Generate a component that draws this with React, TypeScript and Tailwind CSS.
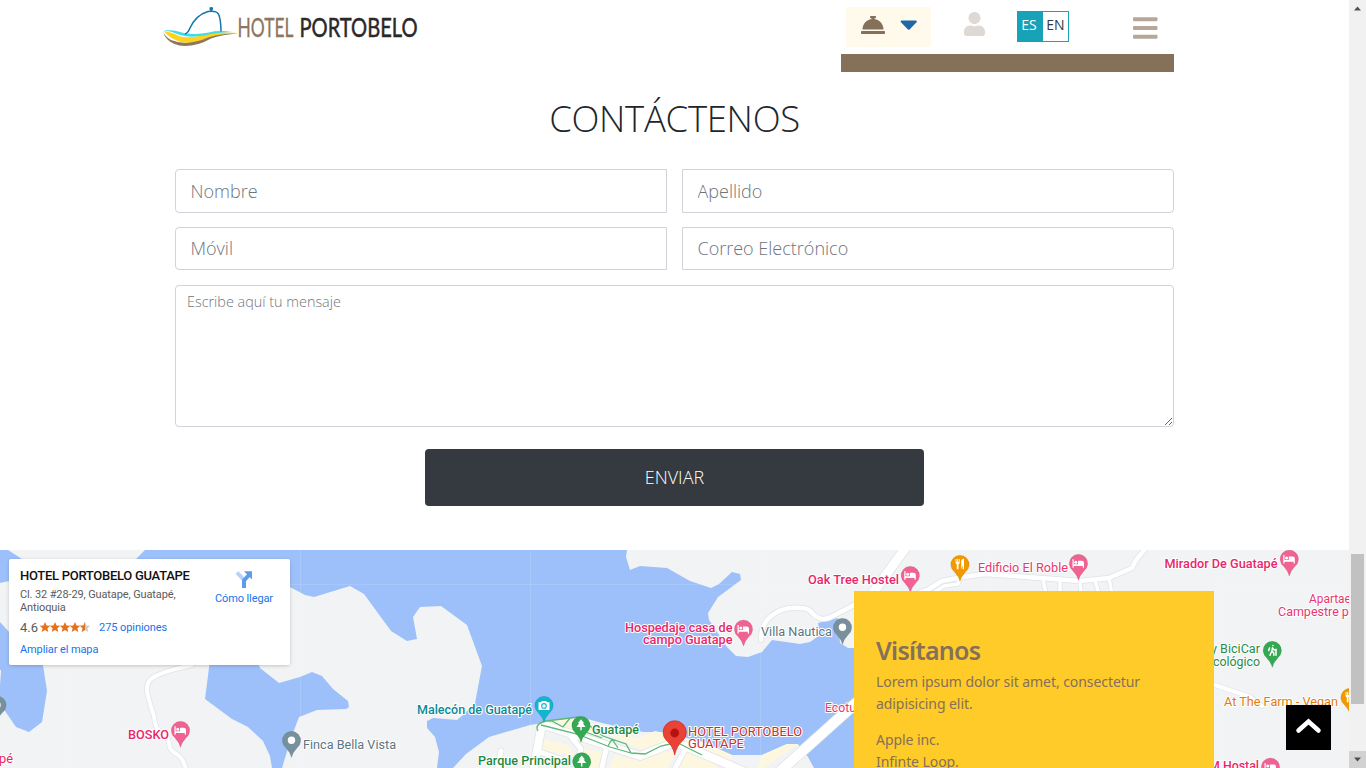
import React from "react";
import { FaConciergeBell, FaUser, FaBars, FaCaretDown } from "react-icons/fa";

const LAND = "#f1f3f4";
const WATER = "#9dc0fa";
const BLOCK = "#fef7e0";
const PINK = "#f06292";
const GREEN = "#34a853";
const SLATE = "#78909c";

type Glyph = "bed" | "dot" | "tree" | "camera" | "fork" | "hiker";

function PinGlyph({ kind }: { kind: Glyph }) {
  switch (kind) {
    case "bed":
      return (
        <g fill="#fff">
          <path d="M-6 -4h1.2v5h4.3v-3.6h3.8q2.2 0 2.2 2.2v4.9h-1.2v-1.8h-9.1v1.8h-1.2z" />
          <circle cx="-2.7" cy="-1.1" r="1.5" />
        </g>
      );
    case "dot":
      return <circle r="3.7" fill="#fff" />;
    case "tree":
      return <path d="M0 -6l3.2 4h-1.4l2.8 3.6h-3.9v3.4h-1.4v-3.4h-3.9l2.8-3.6h-1.4z" fill="#fff" />;
    case "camera":
      return (
        <g>
          <path d="M-5.5 -3h2.5l1-1.4h4l1 1.4h2.5v7.6h-11z" fill="#fff" />
          <circle cy=".6" r="2.3" fill="none" stroke="#12b5cb" strokeWidth="1.1" />
        </g>
      );
    case "fork":
      return (
        <g fill="#fff">
          <path d="M-4.4 -5.3h.9v3h.7v-3h.9v3h.7v-3h.9v3.7q0 1.3-1.2 1.6v5h-1.7v-5q-1.2-.3-1.2-1.6z" />
          <path d="M1.2 5v-8q0-2.2 2.8-2.5v10.500h-1.300v-3.900z" />
        </g>
      );
    case "hiker":
      return (
        <g fill="none" stroke="#fff" strokeWidth="1.5" strokeLinecap="round">
          <circle cx=".6" cy="-4.700" r=".8" fill="#fff" stroke="none" />
          <path d="M.2 -2.600l-.6 3.500 1.700 1.500.3 2.500M-.6 1l-1.700 4M.7 -1.700l1.200 1.300h1.300M3.700 -1v6M-2.800 -2.300l-.8 2.500" />
        </g>
      );
  }
}

function Pin({ x, y, color, kind }: { x: number; y: number; color: string; kind: Glyph }) {
  return (
    <g transform={`translate(${x} ${y})`}>
      <path d="M0 17.300Q-1.200 12-5.500 7.600A9.200 9.200 0 1 1 5.500 7.600Q1.200 12 0 17.300z" fill={color} stroke="#000" strokeOpacity=".13" strokeWidth=".6" />
      <PinGlyph kind={kind} />
    </g>
  );
}

const pins: { x: number; y: number; color: string; kind: Glyph }[] = [
  { x: -3, y: 705, color: SLATE, kind: "dot" },
  { x: 180.5, y: 730.3, color: PINK, kind: "bed" },
  { x: 291.500, y: 740.3, color: SLATE, kind: "dot" },
  { x: 544, y: 705.3, color: "#12b5cb", kind: "camera" },
  { x: 581, y: 725.3, color: GREEN, kind: "tree" },
  { x: 581.700, y: 761.500, color: GREEN, kind: "tree" },
  { x: 743.500, y: 629, color: PINK, kind: "bed" },
  { x: 842.500, y: 627.3, color: SLATE, kind: "dot" },
  { x: 910.3, y: 575.3, color: PINK, kind: "bed" },
  { x: 960, y: 564.3, color: "#f29900", kind: "fork" },
  { x: 1078.500, y: 563.3, color: PINK, kind: "bed" },
  { x: 1289.3, y: 559, color: PINK, kind: "bed" },
  { x: 1272.3, y: 650.3, color: GREEN, kind: "hiker" },
  { x: 1350, y: 697.3, color: "#f29900", kind: "fork" },
  { x: 1270.500, y: 767, color: PINK, kind: "bed" },
];

interface MapLabel { t: string; x: number; y: number; w: number; c: string; bold?: boolean }

const labels: MapLabel[] = [
  { t: "pé", x: -1, y: 763, w: 14, c: "#e8276b" },
  { t: "BOSKO", x: 128, y: 739, w: 41, c: "#e8276b", bold: true },
  { t: "Finca Bella Vista", x: 303, y: 749, w: 93, c: "#5c7480" },
  { t: "Malecón de Guatapé", x: 417, y: 714, w: 115, c: "#0a8a96", bold: true },
  { t: "Guatapé", x: 592, y: 734, w: 47, c: "#1e8a40", bold: true },
  { t: "Parque Principal", x: 478, y: 764.500, w: 93, c: "#1e8a40", bold: true },
  { t: "Hospedaje casa de", x: 625, y: 631.500, w: 107.500, c: "#e8276b", bold: true },
  { t: "campo Guatape", x: 643, y: 644, w: 89.500, c: "#e8276b", bold: true },
  { t: "Villa Nautica", x: 761, y: 636, w: 71, c: "#5c7480" },
  { t: "Ecotu", x: 825, y: 711.500, w: 31, c: "#e8376f" },
  { t: "Oak Tree Hostel", x: 808, y: 584, w: 91, c: "#e8276b", bold: true },
  { t: "Edificio El Roble", x: 978, y: 572, w: 90, c: "#e8376f" },
  { t: "Mirador De Guatapé", x: 1164.500, y: 568, w: 113, c: "#e8276b", bold: true },
  { t: "Apartaes", x: 1309, y: 603, w: 48, c: "#e8376f" },
  { t: "Campestre po", x: 1278, y: 615.500, w: 78, c: "#e8376f" },
  { t: "y BiciCar", x: 1211, y: 653, w: 49, c: "#2a8a47" },
  { t: "Ecológico", x: 1206, y: 666, w: 54, c: "#2a8a47" },
  { t: "At The Farm - Vegan", x: 1224, y: 706, w: 114, c: "#e37a10" },
  { t: "M Hostal", x: 1209, y: 770, w: 50, c: "#e8276b", bold: true },
  { t: "HOTEL PORTOBELO", x: 688, y: 735.500, w: 114, c: "#c72f2c" },
  { t: "GUATAPE", x: 688, y: 748, w: 56, c: "#c72f2c" },
];

const roads: { d: string; w: number }[] = [
  { d: "M192 665Q156 673 150 680Q145 686 148 696Q151 708 154 716Q155 725 157 728L168 739L170 748Q172 752 178 755Q184 760 186 770", w: 4 },
  { d: "M761 640Q761 624 771 616Q783 606 801 608Q809 608 813 614Q820 621 829 618L854 605L870 594", w: 4.500 },
  { d: "M907 546L872 594", w: 9 },
  { d: "M915 594L929 589L942 581L963 577L985 574L1027 577L1080 581L1109 578L1132 568L1136 560L1146 548", w: 4.500 },
  { d: "M933 593L944 586L958 584L961 577", w: 3.500 },
  { d: "M1043 579L1046 594M1060 581L1060 594M1080 581L1081 594M1095 580L1099 594M1109 578L1112 594", w: 3.500 },
  { d: "M1212 684L1250 697L1262 706", w: 4 },
  { d: "M856 703L778 773", w: 10 },
  { d: "M533 773L541 729Q544 724 550 727L640 756L668 745Q674 742 682 745L720 761L745 772", w: 8 },
  { d: "M498 768L501 751", w: 5 },
  { d: "M571 737L581 749L575 768M607 745L601 772M686 748L673 772M540 752L575 764", w: 5 },
];

function Star({ x, clip }: { x: number; clip?: boolean }) {
  const d = "M5 0l1.500 3.500 3.700.3-2.800 2.500.9 3.700-3.300-2-3.300 2 .9-3.700-2.800-2.500 3.700-.3z";
  return (
    <g transform={`translate(${x} 0)`}>
      <path d={d} fill={clip ? "#ccc" : "#e7711b"} />
      {clip && <path d="M5 0v8l-3.300 2 .9-3.700-2.800-2.500 3.700-.3z" fill="#e7711b" />}
    </g>
  );
}

function AreaMap() {
  return (
    <svg className="block h-[218px] w-[1349px]" viewBox="0 550 1349 218">
      <rect y="550" width="1349" height="218" fill={LAND} />
      <g fill={WATER}>
        <path d="M0 550H8L22 559L40 580L9 581L0 583z" />
        <path d="M0 622L9 632L35 650L43 665L47 691L42 722L29 732L16 727L5 711L0 702V685L1 672V670H0z" />
        <path d="M210 660H257L260 668L279 683L300 677L312 672L322 676L333 689L348 701L349 707L346 709L317 710L299 717L291 738L282 768H272L270 756L263 741L248 727L232 719L205 699z" />
        <path d="M145 550H627L626 557L630 570L640 566L667 568L690 581L711 588L719 584L732 572L740 574L741 580L718 597L708 613L709 620L727 647L736 656L748 657L762 652L772 640L800 644L810 642L820 635L818 623L830 620L838 618L840 643L848 648H870V768H814L808 757L798 744H787L762 755H732L703 742L663 732L643 732L602 723L580 717L530 725L489 737L466 754L453 768H437L439 752L435 737L427 728V721L433 718L457 720L463 715L475 703L482 666L467 625L441 606L420 607L413 617L417 639L407 641L391 631L364 594L350 586L314 597L305 595L290 587L260 559H136z" />
      </g>
      <g stroke="#fff" strokeOpacity=".12">
        <path d="M0 584.500H1349M69.500 550V768M300.500 550V768M530.500 550V768M760.500 550V768M991.500 550V768M1221.500 550V768" />
      </g>
      <g fill={BLOCK}>
        <path d="M545 739L568 745L576 757L541 749z" />
        <path d="M548 720L575 719L603 735L567 730z" />
        <path d="M582 749L604 752L599 768H580z" />
        <path d="M615 755L632 759L668 750L676 753L668 768H609z" />
        <path d="M606 733L640 738L655 731L705 743L732 755L728 763L682 742L665 743L646 752L625 742z" />
        <path d="M560 736L588 737L634 748L609 752z" />
        <path d="M762 755L787 744H798L764 768H758z" />
        <path d="M687 752L718 764L717 768H678z" />
      </g>
      <g fill="none" stroke="#e0e3e6" strokeLinejoin="round" strokeLinecap="round">
        {roads.map((r) => <path key={r.d} d={r.d} strokeWidth={r.w + 1.500} />)}
      </g>
      <g fill="none" stroke="#fff" strokeLinejoin="round" strokeLinecap="round">
        {roads.map((r) => <path key={r.d} d={r.d} strokeWidth={r.w} />)}
      </g>
      <path
        d="M538 731Q534 724 546 721L578 717L603 736L626 744L631 753L610 747L577 734L541 725M552 721L563 727L570 718M580 730L602 738M608 746L612 739M618 748L612 739M631 753L645 754L661 746L674 743M680 744L702 755"
        fill="none" stroke="#5bb974" strokeWidth="1.300"
      />
      {pins.map((p) => <Pin key={`${p.x}-${p.y}`} {...p} />)}
      <path d="M674.700 755Q673 746 666.500 740.500A11.600 11.600 0 1 1 682.900 740.500Q676.400 746 674.700 755z" fill="#ea4335" stroke="#c5221f" strokeWidth=".6" />
      <circle cx="674.700" cy="733" r="4.400" fill="#b31412" />
      <g fontFamily="Roboto, 'Liberation Sans', sans-serif" fontSize="12.500" stroke="#fff" strokeWidth="2" strokeLinejoin="round">
        {labels.map((l) => (
          <text key={l.t} x={l.x} y={l.y} textLength={l.w} lengthAdjust="spacingAndGlyphs" fill={l.c} fontWeight={l.bold ? 500 : 400} style={{ paintOrder: "stroke" }}>
            {l.t}
          </text>
        ))}
      </g>
    </svg>
  );
}

function PlaceCard() {
  return (
    <div className="absolute left-[9px] top-[9px] flex h-[106px] w-[281px] justify-between rounded-[2px] bg-white pl-[11px] pr-[17px] font-[Roboto,sans-serif] text-[11px] leading-[13px] shadow-[0_1px_4px_-1px_rgba(0,0,0,0.3)]">
      <div className="w-[180px] pt-[9px]">
        <div className="whitespace-nowrap text-[13px] font-medium leading-[16px] tracking-[-0.28px] text-[#111]">HOTEL PORTOBELO GUATAPE</div>
        <div className="mt-[4px] tracking-[-0.12px] text-[#5b5b5b]">Cl. 32 #28-29, Guatape, Guatapé,<br />Antioquia</div>
        <div className="mt-[5px] flex h-[16px] items-center">
          <span className="text-[13px] text-[#5b5b5b]">4.6</span>
          <svg className="-mt-px ml-[2px] h-[10px] w-[51px]" viewBox="0 0 51 10">
            <Star x={0} /><Star x={10} /><Star x={20} /><Star x={30} /><Star x={40} clip />
          </svg>
          <a className="ml-[8px] tracking-[-0.08px] text-[#1a73e8]">275 opiniones</a>
        </div>
        <a className="mt-[8px] block tracking-[-0.1px] text-[#1a73e8]">Ampliar el mapa</a>
      </div>
      <div className="flex flex-col items-center pt-[12px] text-[#1a73e8]">
        <svg className="h-[17px] w-[18px]" viewBox="0 0 18 17">
          <path d="M2 1.500L9 9" stroke="#b5d2fb" strokeWidth="4" />
          <path d="M9 17V9.500L14 4" fill="none" stroke="#5b9cee" strokeWidth="4" />
          <path d="M9 .3H17V8.600z" fill="#5b9cee" />
        </svg>
        <a className="mt-[4px] tracking-[-0.1px]">Cómo llegar</a>
      </div>
    </div>
  );
}

function Logo() {
  return (
    <svg className="h-[50px] w-[270px] overflow-visible" viewBox="160 0 270 50">
      <path d="M163 31Q165 37 171 40Q180 43.500 188 42.500Q198 41 208 36Q220 32.500 238 33.500Q222 34.500 211 38.500Q198 46 185 46Q173 45.500 167 39Q164 36 163 31z" fill="#8f755c" />
      <path d="M163.500 31Q172 32 180 36.500Q190 38.500 203 35Q217 31.500 238 33Q220 33.500 208 37.500Q195 43.500 183 42.500Q171 40 163.500 31z" fill="#ffd21f" />
      <path d="M163.500 30Q174 29.500 184 33Q196 35 209 32.500Q218 30 232 32Q214 32.500 204 35.500Q190 38 180 35Q172 31.500 163.500 30z" fill="#3fdce2" />
      <path d="M185 34Q188 33 190 28Q196 15 208 11.500Q216 10.500 218.500 14Q221 20 221 31.500" fill="none" stroke="#1175ae" strokeWidth="1.500" />
      <path d="M209.500 7.500Q211 6.500 213 7.500Q213.500 9 212 11H210.500Q209 9 209.500 7.500z" fill="#1175ae" />
      <g fontFamily="Lato, sans-serif" fontSize="27.500">
        <text x="237.500" y="36.500" textLength="56" lengthAdjust="spacingAndGlyphs" fill="#8f755c" stroke="#8f755c" strokeWidth=".3">HOTEL</text>
        <text x="299.500" y="36.500" textLength="118" lengthAdjust="spacingAndGlyphs" fill="#2b2829" stroke="#2b2829" strokeWidth=".5">PORTOBELO</text>
      </g>
    </svg>
  );
}

function Header() {
  return (
    <header className="flex h-[72px] justify-between pl-[160px] pr-[175px]">
      <Logo />
      <div className="flex w-[333px] flex-col justify-between">
        <div className="flex pl-[5px]">
          <div className="mt-[7px] flex h-[40px] w-[85px] items-center bg-[#fffaec] pl-[15px]">
            <FaConciergeBell className="-mt-[5px] h-[24px] w-[24px] text-[#857059]" />
            <FaCaretDown className="-mt-[7px] ml-[15px] h-[28px] w-[17.500px] text-[#1f67a8]" />
          </div>
          <FaUser className="ml-[33px] mt-[12px] h-[24px] w-[21px] text-[#dfd9d3]" />
          <div className="ml-[32px] mt-[11px] flex h-[31px] w-[52px] border border-[#17a2b8] text-[14px] leading-[26px]">
            <span className="w-[25px] bg-[#17a2b8] pr-[3px] text-center text-white">ES</span>
            <span className="flex-1 text-center text-[#343a40]">EN</span>
          </div>
          <FaBars className="ml-[64px] mt-[14px] h-[28px] w-[24.500px] text-[#b5a899]" />
        </div>
        <div className="h-[18px] bg-[#857059]" />
      </div>
    </header>
  );
}

const field = "border border-[#ced4da] bg-white pl-[14.500px] text-[18px] font-light outline-none placeholder:text-[#6c757d]";

function ContactForm() {
  return (
    <form className="flex h-[478px] flex-col px-[175px]">
      <h1 className="mt-[21px] text-center text-[36.500px] font-light leading-[50px] tracking-[-0.3px] text-[#212529]">CONTÁCTENOS</h1>
      <div className="mt-[26px] grid grid-cols-2 gap-x-[15px] gap-y-[14px]">
        <input className={`${field} h-[44px] rounded-l-[4px]`} placeholder="Nombre" />
        <input className={`${field} h-[44px] rounded-r-[4px]`} placeholder="Apellido" />
        <input className={`${field} h-[43px] rounded-l-[4px] pb-[2px]`} placeholder="Móvil" />
        <input className={`${field} h-[43px] rounded-r-[4px] pb-[2px]`} placeholder="Correo Electrónico" />
      </div>
      <textarea
        className="mt-[15px] block h-[142px] w-full shrink-0 resize rounded-[4px] border border-[#ced4da] px-[11px] py-[5px] text-[14.400px] font-light leading-[21px] outline-none placeholder:text-[#6c757d]"
        placeholder="Escribe aquí tu mensaje"
      />
      <button type="button" className="mx-auto mt-[22px] h-[57px] w-[499px] rounded-[4px] bg-[#343a40] text-[18px] font-light text-white">ENVIAR</button>
    </form>
  );
}

function VisitCard() {
  return (
    <div className="absolute left-[854px] top-[41px] h-[177px] w-[360px] overflow-hidden bg-[#ffcb29] px-[22px] pt-[44px] font-['Noto_Sans',sans-serif] text-[14px] leading-[22px] text-[#857059]">
      <h2 className="text-[25px] font-semibold leading-[30px] tracking-[-0.7px]">Visítanos</h2>
      <p className="mt-[6px] whitespace-nowrap tracking-[-0.07px]">Lorem ipsum dolor sit amet, consectetur<br />adipisicing elit.</p>
      <p className="mt-[14px] tracking-[-0.07px]">Apple inc.<br />Infinte Loop.</p>
    </div>
  );
}

function Scrollbar() {
  return (
    <div className="flex w-[17px] flex-col items-center bg-[#f1f1f1]">
      <svg className="h-[17px] w-[17px]" viewBox="0 0 17 17"><path d="M5 10.500L8.500 6.500L12 10.500z" fill="#505050" /></svg>
      <div className="mt-[537px] h-[150px] w-[13px] bg-[#c1c1c1]" />
      <svg className="mt-auto h-[17px] w-[17px] bg-[#d2d2d2]" viewBox="0 0 17 17"><path d="M5 6.500L8.500 10.500L12 6.500z" fill="#505050" /></svg>
    </div>
  );
}

export default function App() {
  return (
    <div className="flex h-[768px] w-[1366px] overflow-hidden bg-white font-['Open_Sans',sans-serif]">
      <main className="w-[1349px]">
        <Header />
        <ContactForm />
        <section className="relative h-[218px] overflow-hidden">
          <AreaMap />
          <PlaceCard />
          <VisitCard />
          <button type="button" aria-label="Subir" className="absolute left-[1286px] top-[155px] flex h-[45px] w-[45px] items-center justify-center bg-black">
            <svg className="-mt-[3px] h-[20px] w-[28px]" viewBox="0 0 28 20"><path d="M3.500 14.500L13.500 5.500L23.500 14.500" fill="none" stroke="#fff" strokeWidth="4.500" strokeLinecap="round" /></svg>
          </button>
        </section>
      </main>
      <Scrollbar />
    </div>
  );
}
